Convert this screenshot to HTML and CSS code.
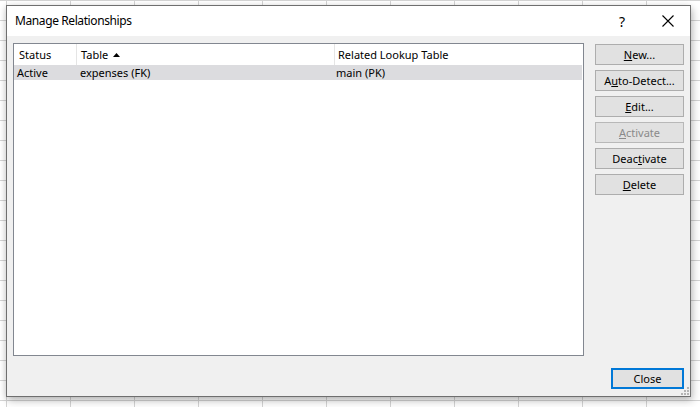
FILE: index.html
```html
<!DOCTYPE html>
<html>
<head>
<meta charset="utf-8">
<link rel="stylesheet" href="styles.css">
</head>
<body>
<div class="dialog">
  <div class="titlebar">
    <span class="title">Manage Relationships</span>
    <span class="help">?</span>
    <svg class="close-x" width="12" height="12" viewBox="0 0 12 12"><path d="M0.5 0.5 L11.5 11.5 M11.5 0.5 L0.5 11.5" stroke="#000" stroke-width="1.1" fill="none"/></svg>
  </div>
  <div class="body">
    <div class="main">
      <div class="list">
        <div class="row header">
          <div class="c1">Status</div>
          <div class="c2">Table <svg class="sort" width="7" height="4" viewBox="0 0 7 4"><path d="M0 4 L3.5 0 L7 4 Z" fill="#000"/></svg></div>
          <div class="c3">Related Lookup Table</div>
        </div>
        <div class="row item">
          <div class="c1">Active</div>
          <div class="c2">expenses (FK)</div>
          <div class="c3">main (PK)</div>
        </div>
      </div>
      <div class="buttons">
        <button class="btn"><u>N</u>ew...</button>
        <button class="btn">A<u>u</u>to-Detect...</button>
        <button class="btn"><u>E</u>dit...</button>
        <button class="btn disabled"><u>A</u>ctivate</button>
        <button class="btn">Deac<u>t</u>ivate</button>
        <button class="btn"><u>D</u>elete</button>
      </div>
    </div>
    <div class="footer">
      <button class="btn close">Close</button>
    </div>
    <svg class="grip" width="8" height="8" viewBox="0 0 8 8" fill="#b4b4b4"><rect x="6" y="0" width="2" height="2"/><rect x="3" y="3" width="2" height="2"/><rect x="6" y="3" width="2" height="2"/><rect x="0" y="6" width="2" height="2"/><rect x="3" y="6" width="2" height="2"/><rect x="6" y="6" width="2" height="2"/></svg>
  </div>
</div>
</body>
</html>
```

FILE: styles.css
```css
html, body {
  margin: 0;
  padding: 0;
}
body {
  width: 700px;
  height: 407px;
  overflow: hidden;
  background-color: #ffffff;
  background-image:
    linear-gradient(to right, #d4d4d4 1px, transparent 1px),
    linear-gradient(to bottom, #d4d4d4 1px, transparent 1px);
  background-size: 64px 20px;
  background-position: 6px 0;
  font-family: "Noto Sans", "Open Sans", sans-serif;
  font-size: 11px;
  color: #000;
}
.dialog {
  position: absolute;
  left: 6px;
  top: 5px;
  width: 685px;
  height: 392px;
  box-sizing: border-box;
  border: 1px solid #6f6f6f;
  background: #f0f0f0;
  box-shadow: 2px 4px 8px rgba(0,0,0,0.22), -1px 1px 6px rgba(0,0,0,0.12);
  display: flex;
  flex-direction: column;
}
.titlebar {
  height: 30px;
  background: #fff;
  display: flex;
  align-items: center;
  padding-left: 8px;
  padding-right: 16px;
}
.title {
  flex: 1;
  font-size: 12px;
  letter-spacing: -0.4px;
  padding-bottom: 1px;
}
.help {
  font-size: 14px;
  margin-right: 37px;
}
.close-x {
  display: block;
}
.body {
  flex: 1;
  position: relative;
  padding: 7px 6px 0 6px;
  display: flex;
  flex-direction: column;
}
.main {
  display: flex;
  gap: 11px;
}
.list {
  width: 571px;
  height: 313px;
  box-sizing: border-box;
  border: 1px solid #828790;
  background: #fff;
}
.row {
  display: flex;
}
.row > div {
  white-space: nowrap;
  box-sizing: border-box;
}
.header {
  height: 21px;
  align-items: center;
}
.header .c1 { width: 63px; padding-left: 5px; border-right: 1px solid #e5e5e5; height: 21px; line-height: 21px; }
.header .c2 { width: 258px; padding-left: 4px; border-right: 1px solid #e5e5e5; height: 21px; line-height: 21px; }
.header .c3 { padding-left: 3px; line-height: 21px; }
.sort {
  display: inline-block;
  vertical-align: 2px;
  margin-left: 2px;
}
.item {
  height: 15px;
  line-height: 15px;
  background: #dcdcdf;
  margin: 0 1px 0 0;
}
.item .c1 { width: 63px; padding-left: 3px; }
.item .c2 { width: 258px; padding-left: 3px; }
.item .c3 { padding-left: 1px; }
.buttons {
  display: flex;
  flex-direction: column;
  gap: 5px;
  margin-top: 1px;
}
.btn {
  font-family: inherit;
  font-size: 11px;
  width: 89px;
  height: 21px;
  box-sizing: border-box;
  background: #e1e1e1;
  border: 1px solid #adadad;
  color: #000;
  padding: 0;
  margin: 0;
  line-height: 18px;
  text-align: center;
}
.btn.disabled {
  background: #e1e1e1;
  border-color: #b8b8b8;
  color: #8a8a8a;
}
.footer {
  display: flex;
  justify-content: flex-end;
  margin-top: 12px;
}
.btn.close {
  width: 73px;
  border: 2px solid #0078d7;
  line-height: 16px;
}
.grip {
  position: absolute;
  right: 1px;
  bottom: 1px;
}
```
